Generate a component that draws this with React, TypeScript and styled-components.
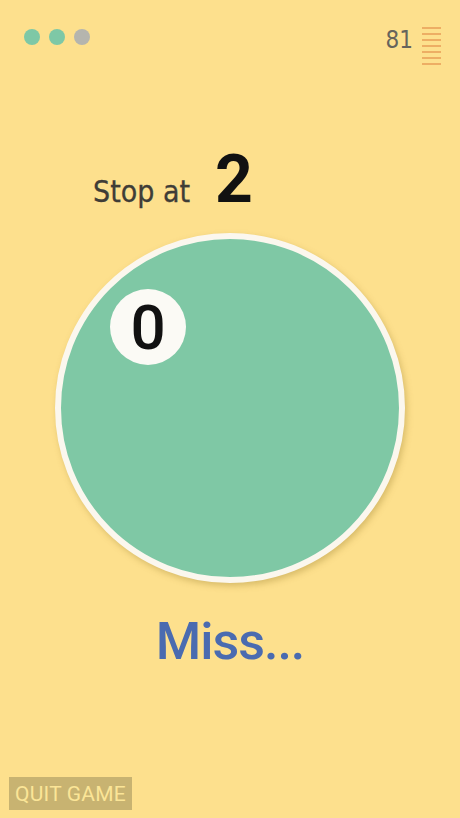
import React from "react";
import styled, { createGlobalStyle } from "styled-components";

const GlobalStyle = createGlobalStyle`
  html, body {
    margin: 0;
    padding: 0;
    background: #fde08d;
  }
  body {
    font-family: "DejaVu Sans Condensed", "Roboto", "Liberation Sans", sans-serif;
  }
`;

const Screen = styled.div`
  width: 460px;
  height: 818px;
  background: #fde08d;
  display: flex;
  flex-direction: column;
  overflow: hidden;
`;

const TopBar = styled.div`
  display: flex;
  justify-content: space-between;
  align-items: flex-start;
  padding: 29px 19px 0 24px;
  height: 40px;
`;

const Dots = styled.div`
  display: flex;
  gap: 9px;
`;

const Dot = styled.span<{ $on?: boolean }>`
  width: 16px;
  height: 16px;
  border-radius: 50%;
  background: ${(p) => (p.$on ? "#7ec8a6" : "#b5b5ae")};
`;

const Score = styled.div`
  display: flex;
  align-items: flex-start;
  gap: 9px;
  margin-top: -3px;
`;

const ScoreNum = styled.span`
  font-size: 24px;
  color: #66645c;
  line-height: 28px;
`;

const Stack = styled.div`
  display: flex;
  flex-direction: column;
  gap: 4px;
  padding-top: 1px;
`;

const StackLine = styled.span`
  width: 19px;
  height: 2px;
  background: #eba85f;
  opacity: 0.9;
`;

const Target = styled.div`
  display: flex;
  align-items: baseline;
  justify-content: flex-start;
  gap: 25px;
  margin-top: 78px;
  padding-left: 93px;
  height: 78px;
`;

const TargetLabel = styled.span`
  font-size: 30px;
  font-weight: 500;
  color: #3f3d37;
  -webkit-text-stroke: 0.3px #3f3d37;
`;

const TargetNum = styled.span`
  font-family: "Roboto", "Liberation Sans", sans-serif;
  font-size: 66px;
  font-weight: bold;
  color: #111;
  line-height: 66px;
`;

const Ring = styled.div`
  align-self: center;
  margin-top: 8px;
  width: 338px;
  height: 338px;
  border-radius: 50%;
  border: 6px solid #fbf7ee;
  background: #7fc8a5;
  box-shadow: 2px 3px 6px rgba(150, 120, 40, 0.35);
  position: relative;
`;

const Counter = styled.div`
  position: absolute;
  left: 49px;
  top: 50px;
  width: 76px;
  height: 76px;
  border-radius: 50%;
  background: #fbfaf5;
  display: flex;
  align-items: center;
  justify-content: center;
  font-family: "Roboto", "Liberation Sans", sans-serif;
  font-size: 62px;
  font-weight: 500;
  color: #111;
`;

const Result = styled.div`
  margin-top: 28px;
  text-align: center;
  font-family: "Roboto", "Liberation Sans", sans-serif;
  font-size: 52px;
  font-weight: 500;
  letter-spacing: -1px;
  color: #4a6bb0;
`;

const Spacer = styled.div`
  flex: 1;
`;

const QuitButton = styled.button`
  align-self: flex-start;
  margin: 0 0 8px 9px;
  width: 123px;
  height: 33px;
  padding: 0;
  border: none;
  background: #c8b371;
  color: #fbe597;
  font-family: "Roboto", "Liberation Sans", sans-serif;
  font-size: 21px;
  letter-spacing: 0.2px;
`;

export default function App() {
  return (
    <>
      <GlobalStyle />
      <Screen>
        <TopBar>
          <Dots>
            <Dot $on />
            <Dot $on />
            <Dot />
          </Dots>
          <Score>
            <ScoreNum>81</ScoreNum>
            <Stack>
              {Array.from({ length: 7 }).map((_, i) => (
                <StackLine key={i} />
              ))}
            </Stack>
          </Score>
        </TopBar>
        <Target>
          <TargetLabel>Stop at</TargetLabel>
          <TargetNum>2</TargetNum>
        </Target>
        <Ring>
          <Counter>0</Counter>
        </Ring>
        <Result>Miss...</Result>
        <Spacer />
        <QuitButton>QUIT GAME</QuitButton>
      </Screen>
    </>
  );
}
